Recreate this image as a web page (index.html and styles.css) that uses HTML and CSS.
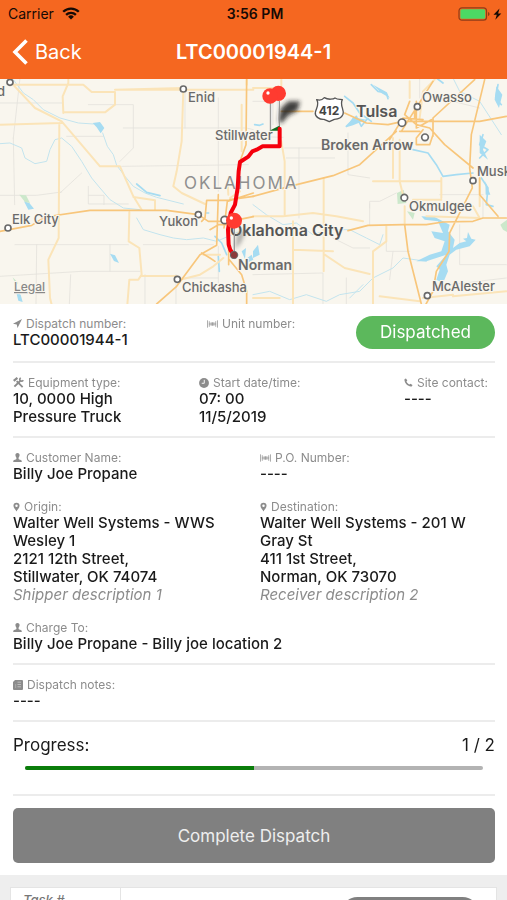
FILE: index.html
```html
<!DOCTYPE html>
<html lang="en">
<head>
<meta charset="utf-8">
<meta name="viewport" content="width=device-width, initial-scale=1">
<title>LTC00001944-1</title>
<link rel="stylesheet" href="styles.css">
</head>
<body>
<svg class="sprite" aria-hidden="true">
  <symbol id="i-barcode" viewBox="0 0 12 10"><path d="M.5 1v8M2.500 2v6M4.500 3v4M6 3v4M7.500 3v4M9.500 2v6M11.500 1v8M2 5h8" stroke="currentColor" stroke-width=".8" fill="none"/></symbol>
  <symbol id="i-person" viewBox="0 0 10 10"><path d="M5 0C3.300 0 2.600 1.100 2.700 2.500 2.800 4 3.500 4.600 3.800 5.300V6.800C3.500 7.600.6 7.600.3 8.700V10H9.700V8.700C9.400 7.600 6.500 7.600 6.200 6.800V5.300C6.500 4.600 7.200 4 7.300 2.500 7.400 1.100 6.700 0 5 0z" fill="currentColor"/></symbol>
  <symbol id="i-pin" viewBox="0 0 8 10"><path fill-rule="evenodd" d="M4 0a3.500 3.500 0 0 1 3.500 3.500C7.500 5.600 5 8 4 10 3 8 .5 5.600.5 3.500A3.500 3.500 0 0 1 4 0zm0 2.100a1.400 1.400 0 1 0 0 2.800 1.400 1.400 0 0 0 0-2.800z" fill="currentColor"/></symbol>
</svg>
<div class="app">
  <header class="top">
    <div class="status">
      <span class="carrier">Carrier
        <svg width="18" height="13" viewBox="0 0 18 13" aria-hidden="true"><g fill="none" stroke="#160a05" stroke-width="2.300"><path d="M1.200 4.800a11 11 0 0 1 15.600 0"/><path d="M4.100 7.900a6.900 6.900 0 0 1 9.800 0"/></g><path d="M9 12.600 6.100 9.700a4.100 4.100 0 0 1 5.800 0z" fill="#160a05"/></svg>
      </span>
      <span class="clock">3:56 PM</span>
      <span class="power">
        <svg width="44" height="14" viewBox="0 0 44 14" aria-hidden="true"><rect x="1" y=".8" width="27.500" height="12.400" rx="3" fill="none" stroke="#8e3d18" stroke-width="1.200"/><rect x="2.400" y="2.200" width="24.800" height="9.600" rx="1.500" fill="#4cd964"/><path d="M30 5v4q1.600-.6 1.600-2T30 5z" fill="#8e3d18"/><path d="M41.500 1.500 35.500 7.800h3.300l-1.500 4.900 6-6.300h-3.200z" fill="#160a05"/></svg>
      </span>
    </div>
    <nav class="bar">
      <a class="back" href="#"><svg width="16" height="26" viewBox="0 0 16 26" aria-hidden="true"><path d="M14.500 1.500 3 13l11.500 11.500" fill="none" stroke="#fff" stroke-width="3.600"/></svg>Back</a>
      <h1>LTC00001944-1</h1>
    </nav>
  </header>

  <main class="content">
    <svg class="map" viewBox="0 0 507 225" role="img" aria-label="Route map">
      <defs><filter id="soft" x="-50%" y="-50%" width="200%" height="200%"><feGaussianBlur stdDeviation="7"/></filter></defs>
      <rect width="507" height="225" fill="#f9f6ee"/>
      <g transform="translate(0 -1) scale(.33333)" fill="none" stroke-linejoin="round" stroke-linecap="round">
        <g stroke="#e4e2dc" stroke-width="2.500">
          <path d="M0 352H110L185 342M265 80H400V210L360 250M370 150H740L760 155M365 265 745 260M200 175H310M40 180 44 380M45 500H385M110 500 108 680M0 595 245 580H420M212 590 208 680M265 325V378H385M265 352H312V380M330 500V580M245 285 180 345M435 590V680M540 600H655M528 590V680M655 60V340M655 505V620M555 150V30M0 75H190M430 500H640M60 0 40 180"/>
          <path transform="translate(759 0)" d="M0 70H60V140M0 175 90 178M95 210H285M138 210V420M100 240H245M285 165V290L350 300M350 390V370H380L430 345M350 378V440M0 590 210 585V680M240 480 300 510H350M400 455V520H470M620 440V560H760M590 620 760 600M500 0V60M560 60 680 90M560 350H690M690 360V420M280 600V680M410 605 420 520"/>
        </g>
        <g stroke="#c3e4ee" stroke-width="3">
          <path d="M40 5 70 45 100 65 130 95 180 120 235 135 280 138M308 165 322 205 340 230 350 262 375 295 400 325 435 345 470 358 510 368 550 378M0 197 30 195 65 210 75 240 105 257 140 250 150 215 165 185 185 180 215 205 245 250 275 300 300 330 330 365 370 390 420 395M410 420 430 455 480 470 520 480 560 485 610 480 650 490 720 460 760 475"/>
          <path transform="translate(759 0)" d="M0 380 40 410 90 440 130 435 180 470 230 455 290 455 340 480 380 500 390 470M0 650 50 640 110 665 160 650 220 670 260 650 320 640 360 600 420 570 450 540 520 550M600 0 620 40 680 70 745 170M290 660 330 620"/>
        </g>
        <g stroke="#a6dcf2" stroke-width="5">
          <path d="M410 318 440 343 480 353M645 475 665 495 680 530M655 535 658 580M620 405h6"/>
          <path transform="translate(759 0)" d="M480 215 525 225 550 260 570 295 610 290 660 285M690 170 680 200 705 215 680 240M685 300 705 330 700 380 720 385M735 20 728 60 745 80M355 20 375 40 400 45 405 62M550 0 570 15M275 55 300 75 320 105 355 130M280 145 310 115 325 145 345 120M5 140 20 142 30 138"/>
        </g>
        <g fill="#a6dcf2">
          <path d="M278 135 300 132 313 150 302 166 290 148zM330 527 345 532 357 555 342 549zM72 370 88 375 102 392 85 395zM48 640 62 650 68 672 55 668z"/>
          <path transform="translate(759 0)" d="M505 415 545 417 590 440 585 460 605 485 600 510 620 495 640 490 630 482 642 480 645 462 655 482 668 485 650 505 610 515 590 530 580 560 585 580 570 615 550 605 560 575 550 565 580 530 520 550 490 550 530 530 565 520 575 490 545 480 535 460 570 465 555 430 515 425zM360 20 400 42 410 60 385 45zM0 520 15 500 20 530 0 540zM680 170 700 190 690 215 705 245 680 225zM730 25 748 50 738 90 725 65zM697 310 712 350 698 350zM340 125 300 142 280 148 300 118z"/>
          <path d="M725 520 738 510 735 545 755 530 760 545 740 555z"/>
        </g>
        <g fill="#cce8cb"><path d="M58 350 78 352 90 375 75 372zM38 598 55 615 48 622z"/><path transform="translate(759 0)" d="M432 345 452 335 460 375 434 378zM462 400 485 405 480 425zM742 440 762 425V462L750 455z"/></g>
        <g stroke="#fbe4b8" stroke-width="6">
          <path d="M0 140 185 135M30 10 105 90 185 130 300 265H360L400 355 425 395M190 105 188 55 205 15V5M190 103H315L345 80V42H275L250 20H40M345 35H760M345 35 550 30M550 35 545 190 530 280 520 325 545 345 615 378M178 135 176 480 145 545 150 660 155 680M400 357 465 367V395M388 402 386 490 418 510 425 590 415 605H388L382 680M425 594H530M740 5V20M725 80V220M685 350 683 310M540 605 600 590 640 565 670 540M690 360 720 340M610 530H660"/>
          <path transform="translate(759 0)" d="M0 30H60M85 190 95 250V410M0 415H90L180 405 250 415 330 430M212 300V580M120 430V680M122 515 240 520M215 530 275 570 350 588M400 445V490L360 520V680M420 180V300M440 185V310L450 350M360 310H565M565 300V360M480 365H565M455 385V440M470 10V60M500 120 510 40 545 5M520 415 680 420M680 420 660 385M680 300V385M510 660 600 650M380 655 500 670M600 655 760 640M0 660 80 660M85 0V40"/>
        </g>
        <g stroke="#f8c67b" stroke-width="5">
          <path d="M0 460 95 442 135 417 270 397H500L595 410M595 410 625 430H690L760 416M470 678 530 625 600 530 650 502 655 350M615 420 620 367H690M615 420 605 430M740 5 738 200 720 250M690 365 760 355M672 450 682 370 760 345M630 455 655 440H700M605 525 630 540 645 550M688 545 725 590 740 640V680M686 560V500"/>
          <path transform="translate(759 0)" d="M0 355 110 325 240 293 320 260 430 160M85 100H180M275 105 340 135 405 140 450 130H680L760 115M445 160 540 10M470 70 455 110 490 140 530 150 575 200 660 270M540 175V120L665 5M535 125 490 150V70M695 5 655 170 650 270 658 330 590 465 588 520 550 580 540 640 518 680M410 185 450 120 510 125M680 300V350L735 415M285 458 345 442 450 440H520L570 432 660 430 690 420H760M455 440 465 520 505 678M440 160H500M510 155 490 180 490 200H530L540 170M485 120V90"/>
        </g>
        <g fill="#fff" stroke="#696969" stroke-width="5">
          <circle cx="30" cy="13" r="9"/><circle cx="550" cy="33" r="9"/><circle cx="595" cy="410" r="9"/><circle cx="674" cy="426" r="11"/><circle cx="24" cy="450" r="9"/><circle cx="532" cy="604" r="9"/>
          <circle cx="1252" cy="86" r="9"/><circle cx="1206" cy="134" r="11"/><circle cx="1275" cy="178" r="10"/><circle cx="1419" cy="308" r="9"/><circle cx="1213" cy="359" r="10"/><circle cx="1282" cy="653" r="9"/>
        </g>
        <path d="M950 65C960 68 968 65 973 59 984 66 1001 64 1005 60 1014 66 1020 63 1027 65 1018 82 1034 95 1029 109 1024 122 1010 124 1003 124L988 131 972 124C959 125 944 116 946 104 947 92 960 80 950 65z" fill="#fff" stroke="#555" stroke-width="4"/>
      </g>
      <g class="town">
        <text x="-3" y="17">d</text><text x="188" y="23">Enid</text><text x="215" y="61">Stillwater</text><text x="159" y="147">Yukon</text><text x="12" y="145">Elk City</text><text x="182" y="213">Chickasha</text>
        <text x="422" y="23">Owasso</text><text x="409" y="132">Okmulgee</text><text x="477" y="97">Musk</text><text x="432" y="212">McAlester</text>
      </g>
      <g class="city"><text x="321" y="71">Broken Arrow</text><text x="238" y="191">Norman</text></g>
      <g class="metro"><text x="356" y="38">Tulsa</text><text x="230" y="157">Oklahoma City</text></g>
      <text class="state" x="184" y="110">OKLAHOMA</text>
      <text class="shield" x="329" y="36">412</text>
      <text class="legal" x="14" y="212">Legal</text>
      <g transform="translate(0 -1) scale(.33333)" fill="none" stroke-linejoin="round" stroke-linecap="round">
        <g filter="url(#soft)"><path d="M836 130 842 92 865 70 900 70 892 98 865 112 845 135z" fill="#222" opacity=".85"/><path d="M704 515 712 470 740 450 722 495z" fill="#777" opacity=".6"/></g>
        <path d="M811 70V155M838 70V150" stroke="#888" stroke-width="3"/>
        <path d="M815 70V152M832 70V150" stroke="#e8e8e8" stroke-width="3"/>
        <path d="M808 158 838 143 843 158z" fill="#126b22"/>
        <path d="M839 152V205H788L770 215 757 220 745 236 720 252 716 280 713 330 705 380 692 405 684 455 686 500 691 516 702 531" stroke="#f5000c" stroke-width="12"/>
        <path d="M703 450V530" stroke="#999" stroke-width="4"/>
        <circle cx="702" cy="531" r="11" fill="#8b3a3a" stroke="#696969" stroke-width="3"/>
        <g fill="#ff3b30"><circle cx="835" cy="46" r="23"/><circle cx="810" cy="54" r="23"/><circle cx="702" cy="428" r="24"/></g>
        <g fill="#fff"><circle cx="804" cy="45" r="5"/><circle cx="694" cy="420" r="5"/></g>
      </g>
    </svg>

    <div class="details">
      <section class="row ids">
        <div><h2><svg width="9" height="9" viewBox="0 0 10 10" aria-hidden="true"><path d="M10 0 0 5.300l4.200.9L5 10z" fill="currentColor"/></svg>Dispatch number:</h2><p>LTC00001944-1</p></div>
        <div><h2><svg width="11" height="10"><use href="#i-barcode"/></svg>Unit number:</h2></div>
        <span class="pill">Dispatched</span>
      </section>
      <section class="row facts">
        <div><h2><svg width="11" height="11" viewBox="0 0 12 12" aria-hidden="true"><g fill="none" stroke="currentColor"><path d="M4 4.500 10.500 11" stroke-width="2"/><path d="M1.500 10.500 8 4.200" stroke-width="2.200"/><path d="M.8 4.200 4.800.9" stroke-width="2.400"/><path d="M8.400.8Q6.500 2.600 8 4T11.300 3.500" stroke-width="1.800"/></g></svg>Equipment type:</h2><p>10, 0000 High Pressure Truck</p></div>
        <div><h2><svg width="10" height="10" viewBox="0 0 11 11" aria-hidden="true"><circle cx="5.500" cy="5.500" r="5.400" fill="currentColor"/><path d="M5.800 2v3.800H3" fill="none" stroke="#fff"/></svg>Start date/time:</h2><p>07: 00</p><p>11/5/2019</p></div>
        <div><h2><svg width="9" height="9" viewBox="0 0 10 10" aria-hidden="true"><path d="M2.200.6C1.200.7.3 1.300.5 2.500.9 5.800 4.200 9.100 7.500 9.500 8.700 9.700 9.300 8.800 9.400 7.800L7.200 6.300 6 7.300C4.500 6.500 3.500 5.500 2.700 4L3.700 2.800z" fill="currentColor"/></svg>Site contact:</h2><p>----</p></div>
      </section>
      <section class="row parties">
        <div><h2><svg width="9" height="9"><use href="#i-person"/></svg>Customer Name:</h2><p>Billy Joe Propane</p></div>
        <div><h2><svg width="11" height="10"><use href="#i-barcode"/></svg>P.O. Number:</h2><p>----</p></div>
        <div><h2><svg width="7" height="10"><use href="#i-pin"/></svg>Origin:</h2><p>Walter Well Systems - WWS</p><p>Wesley 1</p><p>2121 12th Street,</p><p>Stillwater, OK 74074</p><p class="note">Shipper description 1</p></div>
        <div><h2><svg width="7" height="10"><use href="#i-pin"/></svg>Destination:</h2><p>Walter Well Systems - 201 W</p><p>Gray St</p><p>411 1st Street,</p><p>Norman, OK 73070</p><p class="note">Receiver description 2</p></div>
        <div class="wide"><h2><svg width="9" height="9"><use href="#i-person"/></svg>Charge To:</h2><p>Billy Joe Propane - Billy joe location 2</p></div>
      </section>
      <section class="row notes">
        <div><h2><svg width="10" height="10" viewBox="0 0 10 10" aria-hidden="true"><path d="M2 0h7q1 0 1 1v8q0 1-1 1H1Q0 10 0 9V2z" fill="currentColor"/><path d="M4.500 2.200h3.500M4.500 4.500H8M4.500 6.800H8M2 5h1.200M2 7h1.200" stroke="#ddd" stroke-width=".6"/></svg>Dispatch notes:</h2><p>----</p></div>
      </section>
      <section class="row progress">
        <label for="done"><span>Progress:</span><span>1 / 2</span></label>
        <progress id="done" value="1" max="2"></progress>
      </section>
      <button class="complete" type="button">Complete Dispatch</button>
    </div>

    <section class="tasks">
      <article class="task">
        <div class="tasknum">Task #</div>
        <div class="taskbody"><span class="taskpill"></span></div>
      </article>
    </section>
  </main>
</div>
</body>
</html>
```
FILE: styles.css
```css
* { box-sizing: border-box; }
body { margin: 0; font-family: Inter, "Liberation Sans", sans-serif; color: #1a1a1a; background: #fff; }
h1, h2, p { margin: 0; }
.sprite { position: absolute; width: 0; height: 0; }
.app { display: flex; flex-direction: column; height: 100vh; }

.top { background: #f56720; flex: none; }
.status { display: grid; grid-template-columns: 1fr auto 1fr; align-items: center; height: 27px; padding: 0 5px 0 8px; font-size: 14px; color: #160a05; }
.carrier { display: flex; align-items: center; gap: 8px; }
.clock { font-weight: 600; }
.power { display: flex; justify-content: flex-end; }
.bar { display: grid; grid-template-columns: 1fr auto 1fr; align-items: center; height: 52px; padding: 0 12px 2px; color: #fff; }
.back { display: flex; align-items: center; gap: 7px; color: #fff; font-size: 20px; text-decoration: none; }
.bar h1 { font-size: 20px; font-weight: 600; }

.content { flex: 1; min-height: 0; overflow-y: auto; scrollbar-width: none; }
.map { display: block; width: 100%; height: auto; }
.map text { font-weight: 500; fill: #6a6a6a; stroke: #f9f6ee; stroke-width: 2px; paint-order: stroke; }
.town { font-size: 13px; }
.city { font-size: 14px; }
.map .city text { font-weight: 600; }
.metro { font-size: 16px; }
.map .metro text { font-weight: 600; fill: #555; }
.map .state { font-size: 17px; font-weight: 400; fill: #8f8f8f; letter-spacing: 2px; }
.map .shield { font-size: 12px; font-weight: 700; fill: #444; stroke: none; text-anchor: middle; }
.map .legal { font-size: 12px; fill: #888; text-decoration: underline; }

.details { padding: 0 12px 12px 13px; }
.row { border-bottom: 2px solid #ececec; display: grid; }
.row h2 { display: flex; align-items: center; gap: 4px; font-size: 12px; line-height: 15px; font-weight: 400; color: #8c8c8c; white-space: nowrap; }
.row h2 svg { flex: none; }
.row p { font-size: 15px; line-height: 18px; font-weight: 500; }
.row .note { font-weight: 400; font-style: italic; color: #8c8c8c; }
.ids { grid-template-columns: 194fr 149fr 139fr; padding: 12px 0; }
.pill { height: 33px; border-radius: 17px; background: #5cb85c; color: #fff; font-size: 17px; line-height: 33px; text-align: center; }
.facts { grid-template-columns: 186fr 205fr 91fr; padding: 12px 0 10px; }
.facts div:first-child { padding-right: 40px; }
.parties { grid-template-columns: 247fr 235fr; row-gap: 16px; padding: 12px 0 10px; }
.wide { grid-column: 1 / -1; }
.notes { padding: 12px 0 10px; }
.progress { padding: 12px 0 24px; font-size: 17px; gap: 10px; }
.progress label { display: flex; justify-content: space-between; line-height: 22px; }
.progress progress { appearance: none; display: block; width: auto; height: 4px; margin: 0 12px; border: 0; border-radius: 2px; overflow: hidden; background: #b3b3b3; }
progress::-webkit-progress-bar { background: #b3b3b3; }
progress::-webkit-progress-value { background: #0a7d0a; }
.complete { display: block; width: 100%; height: 55px; margin-top: 12px; border: 0; border-radius: 5px; background: #808080; color: #eee; font: 400 17px Inter, "Liberation Sans", sans-serif; }

.tasks { background: #eee; padding: 12px 10px; }
.task { display: grid; grid-template-columns: 110px 1fr; background: #fff; border: 1px solid #e4e4e4; min-height: 60px; }
.tasknum { padding: 4px 12px; border-right: 1px solid #e4e4e4; font-size: 13px; line-height: 16px; font-weight: 500; font-style: italic; color: #777; }
.taskbody { display: flex; justify-content: flex-end; padding: 9px 17px; }
.taskpill { width: 138px; height: 33px; border-radius: 17px; background: #808080; }
```
